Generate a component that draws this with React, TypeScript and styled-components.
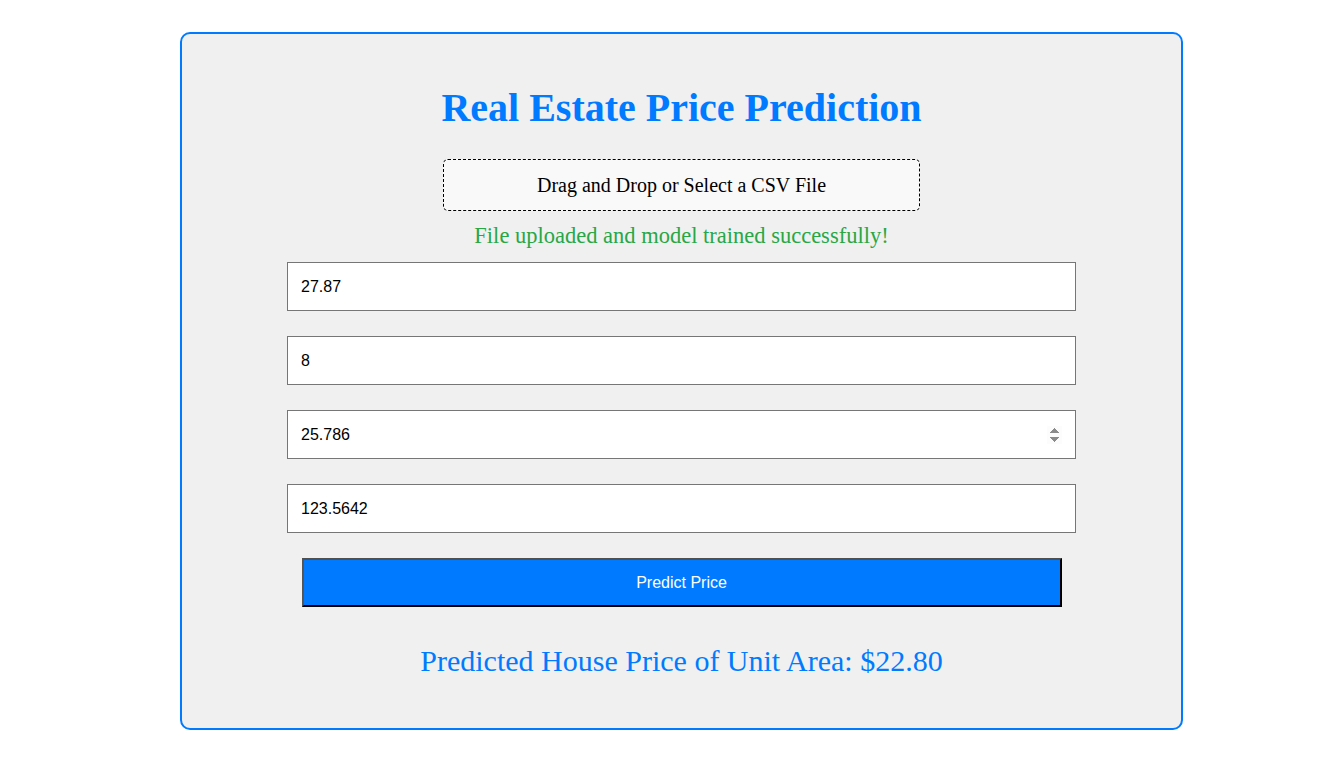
import React from "react";
import styled, { createGlobalStyle } from "styled-components";

const Global = createGlobalStyle`
  html, body { margin: 0; padding: 0; background: #ffffff; }
  body { font-family: "Liberation Serif", "Times New Roman", serif; }
`;

const Page = styled.div`
  padding: 32px 0 40px 180px;
`;

const Card = styled.div`
  box-sizing: border-box;
  width: 1003px;
  border: 2px solid #007bff;
  border-radius: 10px;
  background: #f0f0f0;
  padding: 52px 20px 50px;
  display: flex;
  flex-direction: column;
  align-items: center;
`;

const Title = styled.h1`
  margin: 0 0 29px;
  font-family: "Liberation Serif", "Times New Roman", serif;
  font-size: 40px;
  font-weight: bold;
  line-height: 44px;
  color: #007bff;
  text-align: center;
`;

const DropZone = styled.div`
  box-sizing: border-box;
  width: 477px;
  height: 52px;
  border: 1px dashed #000;
  border-radius: 5px;
  background: #f9f9f9;
  display: flex;
  align-items: center;
  justify-content: center;
  font-size: 20px;
  color: #000;
  cursor: pointer;
`;

const Status = styled.p`
  margin: 12px 0 13px;
  font-size: 22.5px;
  line-height: 26px;
  color: #28a745;
  text-align: center;
`;

const Field = styled.input<{ $spin?: boolean }>`
  box-sizing: border-box;
  width: 789px;
  height: 49px;
  margin: 0 0 25px;
  padding: 0 13px;
  border: 1px solid #767676;
  border-radius: 0;
  background: #fff;
  font-family: "Liberation Sans", Arial, sans-serif;
  font-size: 16px;
  color: #000;
  outline: none;
  &::-webkit-inner-spin-button {
    opacity: ${(p) => (p.$spin ? 1 : 0)};
  }
`;

const PredictButton = styled.button`
  box-sizing: border-box;
  width: 760px;
  height: 49px;
  margin: 0;
  border: 2px solid;
  border-color: #4f4f4f #000 #000 #555;
  background: #007bff;
  color: #fff;
  font-family: "Liberation Sans", Arial, sans-serif;
  font-size: 16px;
  cursor: pointer;
`;

const Result = styled.p`
  margin: 37px 0 0;
  font-size: 30px;
  line-height: 34px;
  color: #007bff;
  text-align: center;
`;

export default function App() {
  return (
    <>
      <Global />
      <Page>
        <Card>
          <Title>Real Estate Price Prediction</Title>
          <DropZone>Drag and Drop or Select a CSV File</DropZone>
          <Status>File uploaded and model trained successfully!</Status>
          <Field type="number" defaultValue="27.87" />
          <Field type="number" defaultValue="8" />
          <Field type="number" defaultValue="25.786" $spin />
          <Field type="number" defaultValue="123.5642" />
          <PredictButton>Predict Price</PredictButton>
          <Result>Predicted House Price of Unit Area: $22.80</Result>
        </Card>
      </Page>
    </>
  );
}
